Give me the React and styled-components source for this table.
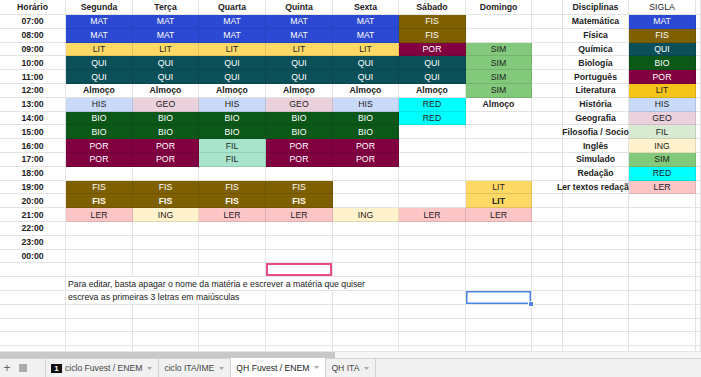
import React from 'react';
import styled, { createGlobalStyle } from 'styled-components';

const GlobalStyle = createGlobalStyle`
  html, body {
    margin: 0;
    padding: 0;
    background: #fff;
  }
  body {
    font-family: 'Liberation Sans', Arial, sans-serif;
  }
  * {
    box-sizing: border-box;
  }
`;

const colors = {
  MAT: ['#2c49d4', '#fff'],
  FIS: ['#7f6000', '#fff'],
  QUI: ['#0b5058', '#fff'],
  BIO: ['#0b5819', '#fff'],
  POR: ['#800040', '#fff'],
  LIT: ['#ffd966', '#222'],
  HIS: ['#c9daf8', '#222'],
  GEO: ['#ead1dc', '#222'],
  FIL: ['#a8e4cc', '#222'],
  ING: ['#fff2cc', '#222'],
  SIM: ['#82c97b', '#222'],
  RED: ['#00ffff', '#222'],
  LER: ['#fdc6c6', '#222'],
};

const bold = (s) => ({ s, b: true });

const days = ['Segunda', 'Terça', 'Quarta', 'Quinta', 'Sexta', 'Sábado', 'Domingo'];

const schedule = [
  ['07:00', ['MAT', 'MAT', 'MAT', 'MAT', 'MAT', 'FIS', '']],
  ['08:00', ['MAT', 'MAT', 'MAT', 'MAT', 'MAT', 'FIS', '']],
  ['09:00', ['LIT', 'LIT', 'LIT', 'LIT', 'LIT', 'POR', 'SIM']],
  ['10:00', ['QUI', 'QUI', 'QUI', 'QUI', 'QUI', 'QUI', 'SIM']],
  ['11:00', ['QUI', 'QUI', 'QUI', 'QUI', 'QUI', 'QUI', 'SIM']],
  ['12:00', ['Almoço', 'Almoço', 'Almoço', 'Almoço', 'Almoço', 'Almoço', 'SIM']],
  ['13:00', ['HIS', 'GEO', 'HIS', 'GEO', 'HIS', 'RED', 'Almoço']],
  ['14:00', ['BIO', 'BIO', 'BIO', 'BIO', 'BIO', 'RED', '']],
  ['15:00', ['BIO', 'BIO', 'BIO', 'BIO', 'BIO', '', '']],
  ['16:00', ['POR', 'POR', 'FIL', 'POR', 'POR', '', '']],
  ['17:00', ['POR', 'POR', 'FIL', 'POR', 'POR', '', '']],
  ['18:00', ['', '', '', '', '', '', '']],
  ['19:00', ['FIS', 'FIS', 'FIS', 'FIS', '', '', 'LIT']],
  ['20:00', [bold('FIS'), bold('FIS'), bold('FIS'), bold('FIS'), '', '', bold('LIT')]],
  ['21:00', ['LER', 'ING', 'LER', 'LER', 'ING', 'LER', 'LER']],
  ['22:00', ['', '', '', '', '', '', '']],
  ['23:00', ['', '', '', '', '', '', '']],
  ['00:00', ['', '', '', '', '', '', '']],
];

const legend = [
  ['Matemática', 'MAT'],
  ['Física', 'FIS'],
  ['Química', 'QUI'],
  ['Biologia', 'BIO'],
  ['Português', 'POR'],
  ['Literatura', 'LIT', '#f5c419'],
  ['História', 'HIS'],
  ['Geografia', 'GEO'],
  ['Filosofia / Socio', 'FIL', '#d9ead3'],
  ['Inglês', 'ING'],
  ['Simulado', 'SIM'],
  ['Redação', 'RED'],
  ['Ler textos redação', 'LER'],
];

const tabs = [
  { name: 'ciclo Fuvest / ENEM', badge: '1' },
  { name: 'ciclo ITA/IME' },
  { name: 'QH Fuvest / ENEM', active: true },
  { name: 'QH ITA' },
];

const Page = styled.div`
  display: flex;
  flex-direction: column;
  width: 701px;
  height: 377px;
  overflow: hidden;
  font-size: 8.7px;
  color: #222;
`;

const Sheet = styled.div`
  flex: 1;
  min-height: 0;
  overflow: hidden;
  display: grid;
  grid-template-columns: 66px 67px 66px 67px 67px 66px 67px 66px 31px 66px 67px 1fr;
  grid-template-rows: 15px;
  grid-auto-rows: 13.8px;
  align-content: start;
`;

const Cell = styled.div`
  display: flex;
  align-items: center;
  justify-content: center;
  min-width: 0;
  white-space: nowrap;
  border-right: 1px solid rgba(0, 0, 0, 0.11);
  border-bottom: 1px solid rgba(0, 0, 0, 0.11);
  background: ${(p) => p.$bg || 'transparent'};
  color: ${(p) => p.$fg || '#222'};
  font-weight: ${(p) => (p.$bold ? 700 : 400)};
`;

const Note = styled(Cell)`
  grid-column: span ${(p) => p.$span};
  justify-content: flex-start;
  padding-left: 2px;
  color: #222;
`;

const Selected = styled(Cell)`
  position: relative;
  z-index: 1;
  box-shadow: inset 0 0 0 ${(p) => p.$width} ${(p) => p.$ring};
`;

const Handle = styled.span`
  position: absolute;
  right: -3px;
  bottom: -3px;
  width: 6px;
  height: 6px;
  background: #4a86e8;
  border: 1px solid #fff;
`;

const ScrollTrack = styled.div`
  height: 7px;
  flex: none;
  background: #f6f6f6;
  border-top: 1px solid #e4e4e4;
`;

const ScrollThumb = styled.div`
  width: 335px;
  height: 100%;
  background: #c8c8c8;
`;

const TabBar = styled.div`
  flex: none;
  height: 19px;
  display: flex;
  align-items: stretch;
  background: #f1f1f1;
  border-top: 1px solid #d2d2d2;
  font-size: 8.6px;
`;

const Controls = styled.div`
  width: 45px;
  display: flex;
  align-items: center;
  color: #666;
`;

const AddButton = styled.span`
  width: 14px;
  text-align: center;
  font-size: 12px;
  line-height: 1;
  color: #666;
`;

const ListButton = styled.span`
  width: 18px;
  display: flex;
  justify-content: center;
`;

const Tab = styled.div`
  display: flex;
  align-items: center;
  gap: 5px;
  padding: 0 6px 0 5px;
  margin-top: ${(p) => (p.$active ? '-1px' : '0')};
  background: ${(p) => (p.$active ? '#fff' : 'transparent')};
  color: ${(p) => (p.$active ? '#222' : '#444')};
  border-left: ${(p) => (p.$first ? '1px solid #d2d2d2' : 'none')};
  border-right: 1px solid #d2d2d2;
`;

const Badge = styled.span`
  width: 11px;
  height: 9px;
  background: #111;
  color: #fff;
  font-weight: 700;
  font-size: 8px;
  line-height: 9px;
  text-align: center;
  margin-right: -2px;
`;

const Caret = () => (
  <svg width="5" height="3" viewBox="0 0 5 3">
    <path d="M0 0h5L2.5 3z" fill="#a8a8a8" />
  </svg>
);

const ListIcon = () => (
  <svg width="8" height="8" viewBox="0 0 8 8">
    <path d="M0 1h8M0 3h8M0 5h8M0 7h8" stroke="#666" strokeWidth="1" />
  </svg>
);

function dayCell(entry, key) {
  const text = typeof entry === 'string' ? entry : entry.s;
  const isBold = typeof entry !== 'string' || text === 'Almoço';
  const c = colors[text];
  return (
    <Cell key={key} $bg={c && c[0]} $fg={c && c[1]} $bold={isBold}>
      {text}
    </Cell>
  );
}

function legendCells(i) {
  const item = legend[i];
  if (!item) {
    return [<Cell key="g" />, <Cell key="n" />, <Cell key="s" />, <Cell key="f" />];
  }
  const [name, code, bg] = item;
  const c = colors[code];
  return [
    <Cell key="g" />,
    <Cell key="n" $bold>{name}</Cell>,
    <Cell key="s" $bg={bg || c[0]} $fg={c[1]}>{code}</Cell>,
    <Cell key="f" />,
  ];
}

function emptyCells(n, prefix) {
  return Array.from({ length: n }, (_, i) => <Cell key={prefix + i} />);
}

export default function App() {
  return (
    <Page>
      <GlobalStyle />
      <Sheet>
        <Cell $bold>Horário</Cell>
        {days.map((d) => (
          <Cell key={d} $bold>{d}</Cell>
        ))}
        <Cell />
        <Cell $bold>Disciplinas</Cell>
        <Cell>SIGLA</Cell>
        <Cell />

        {schedule.map(([time, row], r) => (
          <React.Fragment key={time}>
            <Cell $bold>{time}</Cell>
            {row.map((e, i) => dayCell(e, i))}
            {legendCells(r)}
          </React.Fragment>
        ))}

        {emptyCells(4, 'a')}
        <Selected $ring="#ea4c89" $width="2px" />
        {emptyCells(7, 'b')}

        <Cell />
        <Note $span={5}>
          Para editar, basta apagar o nome da matéria e escrever a matéria que quiser
        </Note>
        {emptyCells(6, 'c')}

        <Cell />
        <Note $span={3}>escreva as primeiras 3 letras em maiúsculas</Note>
        {emptyCells(3, 'd')}
        <Selected $ring="#4a86e8" $width="1.5px">
          <Handle />
        </Selected>
        {emptyCells(4, 'e')}

        {emptyCells(48, 'f')}
      </Sheet>

      <ScrollTrack>
        <ScrollThumb />
      </ScrollTrack>

      <TabBar>
        <Controls>
          <AddButton>+</AddButton>
          <ListButton>
            <ListIcon />
          </ListButton>
        </Controls>
        {tabs.map((t, i) => (
          <Tab key={t.name} $active={t.active} $first={i === 0}>
            {t.badge && <Badge>{t.badge}</Badge>}
            <span>{t.name}</span>
            <Caret />
          </Tab>
        ))}
      </TabBar>
    </Page>
  );
}
